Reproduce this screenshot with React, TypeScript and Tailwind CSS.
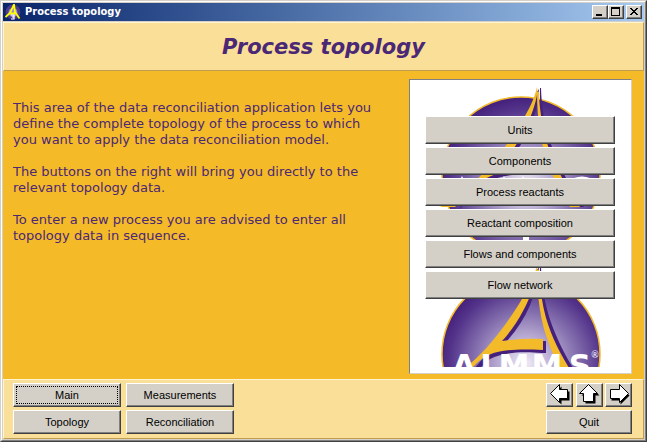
import React from "react";

const bevel =
  "border border-t-white border-l-white border-r-[#404040] border-b-[#404040] bg-[#d4d0c8] shadow-[inset_-1px_-1px_0_#808080] text-[11px] leading-[14px] text-black font-['Liberation_Sans',Arial,sans-serif]";

function Emblem() {
  return (
    <>
      <circle cx="111" cy="96" r="79" fill="url(#globe)" stroke="#f3ba2a" strokeWidth="1.5" />
      <path
        d="M130 8 C129 40 135 80 164 127 H174 C142 80 132 45 131 8Z"
        fill="#45207c"
      />
      <path
        d="M129 9 C127 38 116 62 96 84 L136 83 V95 H132 C108 93 92 95 80 101 L48 130 L80 92 C102 64 120 38 127 12Z"
        fill="#45207c"
      />
      <path
        d="M127 7 C124 20 119 29 112 41 C100 61 82 87 60 106 C50 115 40 122 30 127 H45 C53 120 59 113 65 107 C78 94 92 90 133 92 V81 Q112 80 92 83 C106 68 117 48 123 30 C127 18 128 12 127 7Z"
        fill="#f3ba2a"
      />
      <path d="M127 12 C127 40 131 65 138 83 C144 100 151 114 160 127 H170 C152 100 140 78 134 52 C131 37 129 24 129 12Z" fill="#f3ba2a" />
    </>
  );
}

function Backdrop() {
  return (
    <svg className="col-start-1 row-start-1 h-[287px] w-[221px]" viewBox="0 0 221 287" aria-hidden="true">
      <defs>
        <radialGradient id="globe" cx="0.53" cy="0.56" r="0.56">
          <stop offset="0" stopColor="#f0ecf6" />
          <stop offset="0.25" stopColor="#c3b7da" />
          <stop offset="0.55" stopColor="#8a76b2" />
          <stop offset="0.85" stopColor="#55368c" />
          <stop offset="1" stopColor="#45207c" />
        </radialGradient>
      </defs>
      <Emblem />
      <path d="M51 98 L52 96 L53 98Z M93 98 L94 96 L95 98Z M112 98 L113 96 L114 98Z M164 98 Q172 95 180 98Z" fill="#fff" />
      <path d="M113 150 H119 V178 H113Z" fill="#fff" />
      <g transform="translate(0 178)">
        <Emblem />
        <g
          fill="#fff"
          fontFamily="DejaVu Sans, Verdana, sans-serif"
          fontWeight="700"
          fontSize="31"
          textAnchor="middle"
        >
          <text x="54" y="118">A</text>
          <text x="76" y="118">I</text>
          <text x="104" y="118">M</text>
          <text x="137" y="118">M</text>
          <text x="170" y="118">S</text>
        </g>
        <text x="185" y="100" fill="#fff" fontFamily="Lato, sans-serif" fontSize="9" textAnchor="middle">®</text>
      </g>
    </svg>
  );
}

function AppIcon() {
  return (
    <svg className="size-4" viewBox="0 0 16 16" aria-hidden="true">
      <circle cx="8" cy="8" r="7.500" fill="#4c3a8c" />
      <circle cx="8" cy="8.500" r="4.500" fill="#9a8fc8" />
      <path d="M0.500 13 L5 9 L9 0.500 L10 8 L14.500 14.500 M5 9.500 H11" fill="none" stroke="#ffff00" strokeWidth="1.800" />
      <path d="M6 11 H9 V15 H6 M7 13 H9" fill="none" stroke="#fff" strokeWidth="1.200" />
    </svg>
  );
}

const arrows = {
  left: "M1.500 9.500 L10.500 0.500 V5.500 H18.500 V14.500 H10.500 V18.500Z",
  up: "M10.500 0.500 L19.500 9.500 H15.500 V17.500 H5.500 V9.500 H1.500Z",
  right: "M20.500 9.500 L11.500 0.500 V5.500 H2.500 V14.500 H11.500 V18.500Z",
};

function Arrow({ d, dx }: { d: string; dx: number }) {
  return (
    <svg className="size-[22px]" viewBox="0 0 22 22" aria-hidden="true">
      <path d={d} transform={`translate(${dx} 2)`} />
      <path d={d} fill="#fff" stroke="#000" />
    </svg>
  );
}

const topics = ["Units", "Components", "Process reactants", "Reactant composition", "Flows and components", "Flow network"];
const pages = ["Main", "Measurements", "Topology", "Reconciliation"];
const caption = `${bevel} flex h-[14px] w-4 items-center justify-center`;
const arrowButton = `${bevel} flex h-6 w-[27px] items-center justify-center`;

export default function App() {
  return (
    <div className="border border-t-[#d4d0c8] border-l-[#d4d0c8] border-r-[#404040] border-b-[#404040]">
      <div className="flex min-h-[440px] flex-col border border-t-white border-l-white border-r-[#808080] border-b-[#808080] bg-[#d4d0c8] p-px">
        <header className="mb-px flex h-[18px] items-center bg-linear-to-r from-[#0a246a] to-[#a6caf0] px-0.5">
          <AppIcon />
          <span className="ml-1 flex-1 font-['DejaVu_Sans_Condensed','DejaVu_Sans',Tahoma,sans-serif] text-[11px] leading-4 font-bold text-white">
            Process topology
          </span>
          <button className={caption} aria-label="Minimize">
            <svg className="h-3 w-3.5 shrink-0" viewBox="0 0 14 12" shapeRendering="crispEdges"><path d="M3 8h6v2H3z" /></svg>
          </button>
          <button className={caption} aria-label="Maximize">
            <svg className="h-3 w-3.5 shrink-0" viewBox="0 0 14 12" shapeRendering="crispEdges"><path fillRule="evenodd" d="M2 1h9v9H2zM3 3v6h7V3z" /></svg>
          </button>
          <button className={`${caption} ml-0.5`} aria-label="Close">
            <svg className="h-3 w-3.5 shrink-0" viewBox="0 0 14 12" shapeRendering="crispEdges"><path d="M3 2h2v1h1v1h2V3h1V2h2v1h-1v1H9v1H8v1h1v1h1v1h1v1H9V8H8V7H6v1H5v1H3V8h1V7h1V6h1V5H5V4H4V3H3z" /></svg>
          </button>
        </header>

        <div className="flex h-[49px] items-center justify-center border border-t-[#fff5d0] border-l-[#fff5d0] border-r-[#bf9c50] border-b-[#bf9c50] bg-[#fadf98]">
          <h1 className="font-['DejaVu_Sans',Verdana,sans-serif] text-[21px] leading-6 font-bold text-[#4b2875] italic">
            Process topology
          </h1>
        </div>

        <main className="flex flex-1 items-start justify-between bg-[#f5ba28] pt-2 pr-3 pb-[5px] pl-2.5">
          <div className="flex w-[380px] flex-col gap-4 pt-[21px] font-['DejaVu_Sans',Verdana,sans-serif] text-[13px] leading-4 text-[#4b2875]">
            <p>This area of the data reconciliation application lets you<br />define the complete topology of the process to which<br />you want to apply the data reconciliation model.</p>
            <p>The buttons on the right will bring you directly to the<br />relevant topology data.</p>
            <p>To enter a new process you are advised to enter all<br />topology data in sequence.</p>
          </div>
          <nav className="grid h-[295px] w-[223px] shrink-0 border border-t-[#808080] border-l-[#808080] border-r-[#d4d0c8] border-b-[#d4d0c8] bg-white">
            <Backdrop />
            <div className="col-start-1 row-start-1 flex flex-col gap-[3px] pt-9 pr-4 pl-[15px]">
              {topics.map((t) => (
                <button key={t} className={`${bevel} h-7`}>{t}</button>
              ))}
            </div>
          </nav>
        </main>

        <footer className="flex h-[60px] items-start justify-between border border-t-[#fff5d0] border-l-[#fff5d0] border-r-[#bf9c50] border-b-[#bf9c50] bg-[#fadf98] pt-[3px] pr-[11px] pl-[9px]">
          <nav className="grid grid-cols-[108px_108px] gap-x-[5px] gap-y-[3px]">
            {pages.map((p) => (
              <button key={p} className={`${bevel} h-6 p-0.5`}>
                <span className={p === "Main" ? "flex h-full items-center justify-center border border-dotted border-black" : ""}>{p}</span>
              </button>
            ))}
          </nav>
          <nav className="flex w-[86px] flex-col gap-[3px]">
            <div className="flex justify-between">
              <button className={arrowButton} aria-label="Previous"><Arrow d={arrows.left} dx={2} /></button>
              <button className={arrowButton} aria-label="Up"><Arrow d={arrows.up} dx={2} /></button>
              <button className={arrowButton} aria-label="Next"><Arrow d={arrows.right} dx={1} /></button>
            </div>
            <button className={`${bevel} h-6`}>Quit</button>
          </nav>
        </footer>
      </div>
    </div>
  );
}
